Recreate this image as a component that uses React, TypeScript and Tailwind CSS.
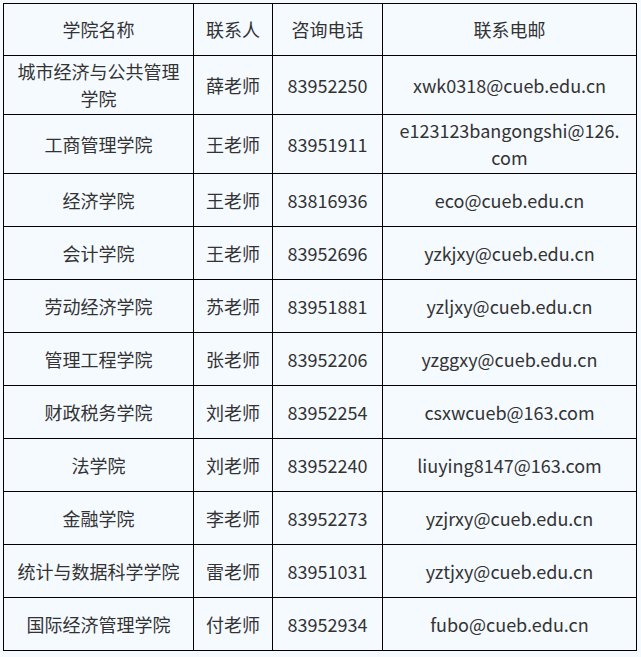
const rows = [
  { school: '城市经济与公共管理学院', contact: '薛老师', phone: '83952250', email: 'xwk0318@cueb.edu.cn' },
  { school: '工商管理学院', contact: '王老师', phone: '83951911', email: 'e123123bangongshi@126.', emailTail: 'com' },
  { school: '经济学院', contact: '王老师', phone: '83816936', email: 'eco@cueb.edu.cn' },
  { school: '会计学院', contact: '王老师', phone: '83952696', email: 'yzkjxy@cueb.edu.cn' },
  { school: '劳动经济学院', contact: '苏老师', phone: '83951881', email: 'yzljxy@cueb.edu.cn' },
  { school: '管理工程学院', contact: '张老师', phone: '83952206', email: 'yzggxy@cueb.edu.cn' },
  { school: '财政税务学院', contact: '刘老师', phone: '83952254', email: 'csxwcueb@163.com' },
  { school: '法学院', contact: '刘老师', phone: '83952240', email: 'liuying8147@163.com' },
  { school: '金融学院', contact: '李老师', phone: '83952273', email: 'yzjrxy@cueb.edu.cn' },
  { school: '统计与数据科学学院', contact: '雷老师', phone: '83951031', email: 'yztjxy@cueb.edu.cn' },
  { school: '国际经济管理学院', contact: '付老师', phone: '83952934', email: 'fubo@cueb.edu.cn' },
];

const cell = 'border border-black px-2 py-[2px] text-center align-middle';

export default function App() {
  return (
    <div className="min-h-[657px] bg-[#f5faff] pl-[3px] pt-[3px] font-['Noto_Sans_CJK_SC','Noto_Sans',sans-serif] text-[18px] leading-[27px] text-[#333]">
      <table className="w-[633px] table-fixed border-collapse">
        <colgroup>
          <col className="w-[190px]" />
          <col className="w-[79px]" />
          <col className="w-[110px]" />
          <col className="w-[254px]" />
        </colgroup>
        <thead>
          <tr className="h-[52px]">
            <th className={`${cell} font-normal`}>学院名称</th>
            <th className={`${cell} font-normal`}>联系人</th>
            <th className={`${cell} font-normal`}>咨询电话</th>
            <th className={`${cell} font-normal`}>联系电邮</th>
          </tr>
        </thead>
        <tbody>
          {rows.map((r) => (
            <tr key={r.school} className="h-[53px]">
              <td className={cell}>{r.school}</td>
              <td className={cell}>{r.contact}</td>
              <td className={cell}>{r.phone}</td>
              <td className={cell}>
                {r.email}
                {r.emailTail ? (
                  <>
                    <br />
                    {r.emailTail}
                  </>
                ) : null}
              </td>
            </tr>
          ))}
        </tbody>
      </table>
    </div>
  );
}
